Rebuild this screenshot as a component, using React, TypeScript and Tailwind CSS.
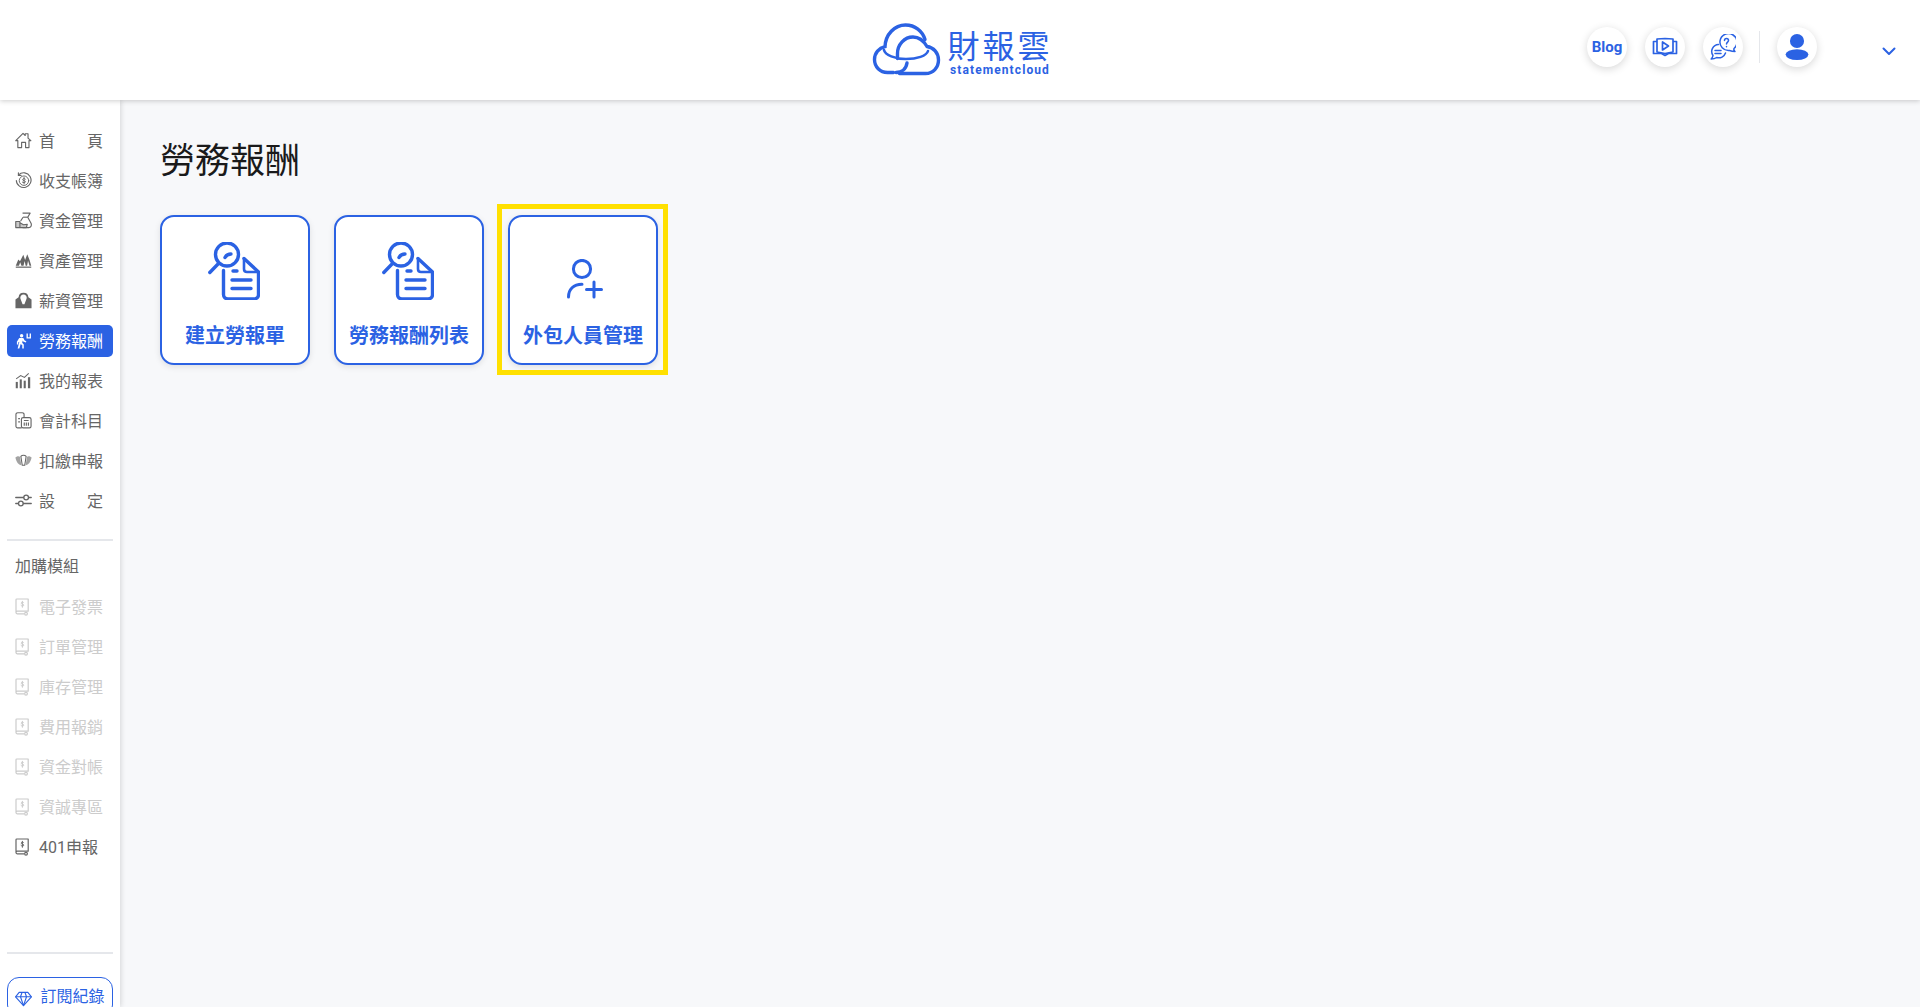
import React from 'react';

type IconProps = { className?: string };

const HomeIcon = ({ className }: IconProps) => (
  <svg viewBox="0 0 18 18" fill="none" stroke="currentColor" strokeWidth="1.2" strokeLinejoin="round" strokeLinecap="round" className={className}>
    <path d="M.8 9.200 8.500 1.500l2.300 2.200V1.800h3v4.700l3 2.700h-2V16.500h-3.600V11H7V16.500H3V9.200z" />
  </svg>
);

const CoinIcon = ({ className }: IconProps) => (
  <svg viewBox="0 0 18 18" fill="none" stroke="currentColor" strokeWidth="1.2" strokeLinecap="round" className={className}>
    <path d="M3.800 3A7.800 7.800 0 1 1 1.400 9" />
    <path d="M3.600.8v2.800h2.800" />
    <circle cx="9.500" cy="9.200" r="5" strokeWidth="1" />
    <path d="M11 7.500c-.5-.7-2.900-.9-2.900.6 0 1.500 3 .7 3 2.200 0 1.300-2.500 1.200-3.300.5M9.600 5.800v6.800" strokeWidth="1" />
  </svg>
);

const MoneyBagIcon = ({ className }: IconProps) => (
  <svg viewBox="0 0 18 18" fill="none" stroke="currentColor" strokeWidth="1.2" strokeLinejoin="round" className={className}>
    <path d="M8 1.200h8l-2.500 4.300 3.500 6.500c.8 2 0 4.500-2.500 4.500H8" />
    <path d="M8.500 5.500h5" />
    <path d="M8.500 5.500 6 9.500" />
    <path d="M.8 10h4.400v6.500H.8zM5.200 11.500 9 13.500l4-.5-1 3.500H5.200" fill="currentColor" fillOpacity=".35" />
  </svg>
);

const AssetIcon = ({ className }: IconProps) => (
  <svg viewBox="0 0 18 18" fill="currentColor" className={className}>
    <path d="M.8 14.600 3.500 8l1.800 1.700L8.800 3l1.900 5.500 2.300-6 2.500 6.300 1.700 5.800h-1.800l-1.600-5.400-1 5.400h-1.500l-1.100-5.200-1.200 5.200H6.800L5.500 10.800 4.200 14.600z" />
    <rect x=".8" y="15.400" width="16.400" height="1.300" />
  </svg>
);

const SalaryIcon = ({ className }: IconProps) => (
  <svg viewBox="0 0 18 18" fill="currentColor" className={className}>
    <path d="M9 .8a5.200 5.200 0 0 1 5.200 4.700L17.500 8v9.200H.5V8l3.300-2.500A5.200 5.200 0 0 1 9 .8zm0 1.800A3.400 3.400 0 0 0 5.700 6.800L8 13h2l2.300-6.200A3.400 3.400 0 0 0 9 2.600z" />
  </svg>
);

const RunIcon = ({ className }: IconProps) => (
  <svg viewBox="0 0 18 18" fill="currentColor" className={className}>
    <circle cx="7" cy="4" r="1.800" />
    <path d="M4.500 6.400h4.300l1.500 2.700 1.700.6-.4 1.400-2.600-.9-.8-1.200-.6 2.500 1.700 1.700V17.500H7.700v-3.500L6 12.600 4.600 17.500H2.800l1.800-7.300-1.200.9v2.200H2V10.200z" />
    <path d="M12.200 1.500h1.400v4h1.900v-4h1.400v5.400h-4.700z" />
  </svg>
);

const ChartIcon = ({ className }: IconProps) => (
  <svg viewBox="0 0 18 18" fill="currentColor" className={className}>
    <rect x=".8" y="10.500" width="2.200" height="6.700" />
    <rect x="5" y="7.800" width="2.200" height="9.400" />
    <rect x="9.200" y="9.200" width="2.200" height="8" />
    <rect x="13.700" y="5.500" width="2.400" height="11.700" />
    <path d="M1.200 7.200 6 3.800l4 2 4.500-4.300" fill="none" stroke="currentColor" strokeWidth="1.100" />
  </svg>
);

const LedgerIcon = ({ className }: IconProps) => (
  <svg viewBox="0 0 18 18" fill="none" stroke="currentColor" strokeWidth="1.200" strokeLinejoin="round" className={className}>
    <path d="M7 16.800H2.800A1.800 1.800 0 0 1 1 15V2.600A1.800 1.800 0 0 1 2.800.8h5A1.800 1.800 0 0 1 9.600 2.600v3" />
    <rect x="6.800" y="6" width="10.200" height="10.800" rx="1.800" />
    <path d="M9.400 9h5M9.800 11.200v3.400M12 11.200v3.400M14.200 11.200v3.400M3.400 7h1.800M3.400 10.400h1.800" />
  </svg>
);

const CrownIcon = ({ className }: IconProps) => (
  <svg viewBox="0 0 18 18" fill="currentColor" className={className}>
    <path d="M.4 5.800c2.200-1.700 3.800-1.500 4.800-.7L6.800 14c-3.200-.2-5.400-3.600-6.400-8.200zM17.600 5.800c-2.200-1.700-3.800-1.500-4.800-.7L11.200 14c3.200-.2 5.400-3.600 6.400-8.200z" opacity=".6" />
    <path d="M6.200 4.600C7.500 3 10.500 3 11.800 4.600L10.300 14H7.700z" fill="none" stroke="currentColor" strokeWidth="1.100" />
  </svg>
);

const SliderIcon = ({ className }: IconProps) => (
  <svg viewBox="0 0 18 18" fill="none" stroke="currentColor" strokeWidth="1.400" strokeLinecap="round" className={className}>
    <path d="M.8 5.800h8.200M14.600 5.800h2.600M.8 12.200h2.600M9 12.200h8.200" />
    <circle cx="11.800" cy="5.800" r="2.500" />
    <circle cx="6.200" cy="12.200" r="2.500" />
  </svg>
);

const ModuleIcon = ({ className }: IconProps) => (
  <svg viewBox="0 0 18 18" fill="none" stroke="currentColor" strokeWidth="1.200" strokeLinejoin="round" className={className}>
    <path d="M10 15.800H3.400A1.400 1.400 0 0 1 2 14.400V1.800A.8.800 0 0 1 2.800 1h11.400v12.200H3.400A1.300 1.300 0 0 0 2 14.400" />
    <circle cx="12" cy="15.800" r="1.400" />
    <path d="M9.700 4.700c-.4-.8-2.500-.9-2.500.4 0 1.300 2.600.7 2.600 2 0 1.300-2.300 1.100-2.800.4M8.400 3.300v6" strokeWidth="1" strokeLinecap="round" />
  </svg>
);

const GemIcon = ({ className }: IconProps) => (
  <svg viewBox="0 0 18 18" fill="none" stroke="currentColor" strokeWidth="1.200" strokeLinejoin="round" className={className}>
    <path d="M4.400 2.500h9.200L17.400 7.200 9 16.500.6 7.200z" />
    <path d="M.6 7.200h16.800M5.800 7.200 9 16.500l3.200-9.300M5.800 7.200 7.500 2.500M12.200 7.200 10.500 2.500" />
  </svg>
);

const LogoIcon = ({ className }: IconProps) => (
  <svg viewBox="0 0 68 53" fill="none" stroke="#2b62e3" strokeWidth="3.400" strokeLinecap="round" className={className}>
    <path d="M21 49.500H15C7.500 49.500 2 43.800 2 36.500 2 30 6.500 25 12.500 23.700 13 11.500 22 2 33 2c9.500 0 17 6.200 19.500 14.500" />
    <path d="M27 50.500h26c7.700 0 13-6 13-13.500 0-7-5-12.600-11.500-13.500C51 17.500 45.500 14 40.500 14 32 14 25 21.500 25 30.500c0 3 0 5 0 5" />
    <path d="M11.500 27c1 5 11 9 22 9 11 0 20.500-3 22-8" strokeWidth="2.600" />
    <path d="M23.500 49.500c5 0 10-3 11-9.500" />
  </svg>
);

const SearchDocIcon = ({ className }: IconProps) => (
  <svg viewBox="0 0 52 58" fill="none" stroke="#2b62e3" strokeWidth="3.400" strokeLinecap="round" strokeLinejoin="round" className={className}>
    <circle cx="19" cy="12.500" r="11.500" />
    <path d="M1.800 30.500 10.500 21.500" />
    <path d="M17 15.500c1-2 3-3.500 6-3.500" />
    <path d="M36 16.500 50.500 30v22.500c0 2.500-2 4.500-4.500 4.500H20c-2.500 0-4.500-2-4.500-4.500V28.500" />
    <path d="M36 16.500V27c0 1.500 1 3 3 3h11.500" strokeWidth="2.600" />
    <path d="M25 29h4M24 38h19M24 46.500h19" />
  </svg>
);

const PersonAddIcon = ({ className }: IconProps) => (
  <svg viewBox="0 0 36 40" fill="none" stroke="#2b62e3" strokeWidth="3" strokeLinecap="round" className={className}>
    <circle cx="15" cy="10" r="8.600" />
    <path d="M1.500 38c0-7.500 5-12.800 13.500-12.800" />
    <path d="M27 23v15M19.500 30.500h15" />
  </svg>
);

const BookPlayIcon = ({ className }: IconProps) => (
  <svg viewBox="0 0 26 20" fill="none" stroke="#2b62e3" strokeWidth="1.700" strokeLinejoin="round" className={className}>
    <path d="M5 2 13 1.500 21 2v13l-8 1.500L5 15z" />
    <path d="M5 4.500H1.500v12h8L13 18.500l3.500-2h8v-12H21" />
    <path d="M10.500 5v8l6-4z" />
  </svg>
);

const ChatHelpIcon = ({ className }: IconProps) => (
  <svg viewBox="0 0 26 26" fill="none" stroke="#2b62e3" strokeWidth="1.500" strokeLinecap="round" strokeLinejoin="round" className={className}>
    <path d="M25 17.500c-1-.8-1.300-2-1-3A8.500 8.500 0 1 0 19.500 16.500c2 .8 3.500 1 5.500 1z" />
    <path d="M8.500 10.500A7 7 0 0 0 3 21.500c-.2 1.500-.8 2.500-1.800 3.500 2.500 0 4-.5 5.500-1.500A7 7 0 0 0 15.500 19" />
    <path d="M14.500 6.500c0-2.600 4-2.600 4 0 0 1.500-2 1.800-2 3.500M16.500 12.500v.2" />
    <path d="M5 16.500h6M5 19.500h6" />
  </svg>
);

const UserSolidIcon = ({ className }: IconProps) => (
  <svg viewBox="0 0 22 24" fill="#2b62e3" className={className}>
    <circle cx="11" cy="6.500" r="6.500" />
    <ellipse cx="11" cy="19" rx="10.500" ry="5" />
  </svg>
);

const mainNav = [
  { label: ['首', '頁'], icon: HomeIcon },
  { label: ['收支帳簿'], icon: CoinIcon },
  { label: ['資金管理'], icon: MoneyBagIcon },
  { label: ['資產管理'], icon: AssetIcon },
  { label: ['薪資管理'], icon: SalaryIcon },
  { label: ['勞務報酬'], icon: RunIcon, active: true },
  { label: ['我的報表'], icon: ChartIcon },
  { label: ['會計科目'], icon: LedgerIcon },
  { label: ['扣繳申報'], icon: CrownIcon },
  { label: ['設', '定'], icon: SliderIcon },
];

const modules = [
  { label: '電子發票', disabled: true },
  { label: '訂單管理', disabled: true },
  { label: '庫存管理', disabled: true },
  { label: '費用報銷', disabled: true },
  { label: '資金對帳', disabled: true },
  { label: '資誠專區', disabled: true },
  { label: '401申報', disabled: false },
];

const cards = [
  { label: '建立勞報單', icon: <SearchDocIcon className="w-[52px] h-[58px] mr-0.5" /> },
  { label: '勞務報酬列表', icon: <SearchDocIcon className="w-[52px] h-[58px] mr-0.5" /> },
  { label: '外包人員管理', icon: <PersonAddIcon className="w-[36px] h-[40px] mt-4 ml-1" />, highlight: true },
];

const CircleButton = ({ children }: { children: React.ReactNode }) => (
  <button className="w-10 h-10 rounded-full bg-white shadow-[0_2px_8px_rgba(0,0,0,0.16)] flex items-center justify-center">
    {children}
  </button>
);

export default function App() {
  return (
    <div className="h-screen overflow-hidden flex flex-col bg-[#f7f8fa] font-['Roboto','Noto_Sans_CJK_TC',sans-serif]">
      <header className="relative z-20 h-[100px] shrink-0 bg-white shadow-[0_1px_5px_rgba(0,0,0,0.2)] flex items-center">
        <div className="flex-1" />
        <div className="flex items-start gap-[5px] translate-x-[13px]">
          <LogoIcon className="w-[73px] h-[53px]" />
          <div className="flex flex-col items-center pt-[7px]">
            <span className="text-[32px] leading-[34px] tracking-[3px] text-[#2b62e3] font-normal">財報雲</span>
            <span className="text-[12px] leading-[13px] font-bold tracking-[1.1px] text-[#2b62e3]">statementcloud</span>
          </div>
        </div>
        <div className="flex-1 flex items-center justify-end pr-[24px] -translate-y-[3px]">
          <div className="flex items-center gap-[18px]">
            <CircleButton>
              <span className="text-[15px] font-bold text-[#2b62e3]">Blog</span>
            </CircleButton>
            <CircleButton>
              <BookPlayIcon className="w-[26px] h-5" />
            </CircleButton>
            <CircleButton>
              <ChatHelpIcon className="w-[26px] h-[26px]" />
            </CircleButton>
          </div>
          <div className="w-px h-8 bg-gray-200 ml-4 mr-[17px]" />
          <CircleButton>
            <UserSolidIcon className="w-6 h-[26px]" />
          </CircleButton>
          <svg viewBox="0 0 14 9" fill="none" stroke="#2b62e3" strokeWidth="2" strokeLinecap="round" strokeLinejoin="round" className="w-[14px] h-[9px] ml-[65px] mt-2">
            <path d="M1.500 1.500 7 7l5.500-5.500" />
          </svg>
        </div>
      </header>

      <div className="flex flex-1 min-h-0">
        <aside className="w-[120px] shrink-0 bg-white shadow-[1px_0_5px_rgba(0,0,0,0.14)] px-[7px] pt-[25px] flex flex-col z-10">
          <nav className="flex flex-col gap-2 shrink-0">
            {mainNav.map((item) => {
              const Icon = item.icon;
              return (
                <div
                  key={item.label.join('')}
                  className={`h-8 rounded-[5px] pl-2 pr-[10px] flex items-center gap-2 text-base ${
                    item.active ? 'bg-[#2b62e3] text-white' : 'text-[#666666]'
                  }`}
                >
                  <Icon className="w-[17px] h-[17px] shrink-0 -mt-px -mr-px" />
                  <span className="flex-1 flex justify-between pt-px">
                    {item.label.map((part) => (
                      <span key={part}>{part}</span>
                    ))}
                  </span>
                </div>
              );
            })}
          </nav>

          <div className="h-0.5 shrink-0 bg-gray-200 mt-[22px]" />
          <div className="h-8 shrink-0 mt-[10px] mb-2 pl-2 flex items-center text-base text-[#666666]">加購模組</div>

          <div className="flex flex-col gap-2 shrink-0">
            {modules.map((item) => (
              <div
                key={item.label}
                className={`h-8 pl-[7px] pr-[10px] flex items-center gap-[7px] text-base ${
                  item.disabled ? 'text-[#cccccc]' : 'text-[#666666]'
                }`}
              >
                <ModuleIcon className="w-[18px] h-[18px] shrink-0 -mt-px" />
                <span className="pt-px">{item.label}</span>
              </div>
            ))}
          </div>

          <div className="h-0.5 shrink-0 bg-gray-200 mt-[89px]" />
          <button className="mt-[23px] h-10 shrink-0 rounded-[12px] border-[1.5px] border-[#2b62e3] bg-white flex items-center justify-center gap-2 text-base text-[#2b62e3]">
            <GemIcon className="w-[17px] h-[17px] mt-0.5" />
            訂閱紀錄
          </button>
        </aside>

        <main className="flex-1 pl-10 pt-[38px]">
          <h1 className="text-[35px] leading-[48px] font-normal text-[#1a1a1a]">勞務報酬</h1>
          <div className="flex gap-6 mt-[29px]">
            {cards.map((card) => (
              <div key={card.label} className="relative">
                <div className="w-[150px] h-[150px] rounded-[14px] border-2 border-[#2b62e3] bg-white shadow-[0_2px_6px_rgba(0,0,0,0.1)] flex flex-col items-center pt-[25px]">
                  <div className="h-[58px] flex items-center">{card.icon}</div>
                  <span className="mt-[22px] text-[20px] leading-7 font-semibold text-[#2b62e3]">{card.label}</span>
                </div>
                {card.highlight && <div className="absolute -top-[11px] -left-[11px] w-[171px] h-[171px] border-[5px] border-[#ffe000]" />}
              </div>
            ))}
          </div>
        </main>
      </div>
    </div>
  );
}
